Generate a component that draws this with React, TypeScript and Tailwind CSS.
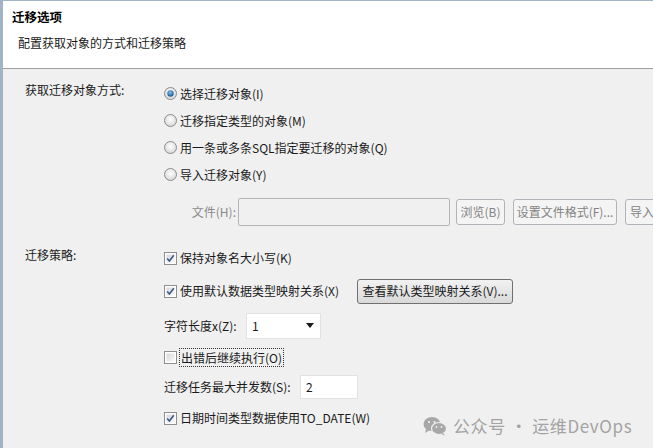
import React from 'react';

// 迁移选项页：获取对象方式 + 迁移策略
const FONT = '[font-family:"Noto_Sans_CJK_SC","Microsoft_YaHei",sans-serif]';

const Radio: React.FC<{ checked?: boolean }> = ({ checked }) => (
  <svg width="13" height="13" viewBox="0 0 13 13" className="shrink-0">
    <defs>
      <radialGradient id="rfill" cx="50%" cy="40%" r="60%">
        <stop offset="0%" stopColor="#ffffff" />
        <stop offset="100%" stopColor="#d6d6d6" />
      </radialGradient>
      <radialGradient id="rdot" cx="45%" cy="35%" r="60%">
        <stop offset="0%" stopColor="#7fc3ef" />
        <stop offset="100%" stopColor="#1d5c94" />
      </radialGradient>
    </defs>
    <circle cx="6.5" cy="6.5" r="6" fill="url(#rfill)" stroke="#8c8c8c" strokeWidth="1" />
    {checked && <circle cx="6.5" cy="6.5" r="3.2" fill="url(#rdot)" />}
  </svg>
);

const Check: React.FC<{ checked?: boolean }> = ({ checked }) => (
  <svg width="13" height="13" viewBox="0 0 13 13" className="shrink-0">
    <defs>
      <linearGradient id="cfill" x1="0" y1="0" x2="1" y2="1">
        <stop offset="0%" stopColor="#d8d8d8" />
        <stop offset="100%" stopColor="#f8f8f8" />
      </linearGradient>
    </defs>
    <rect x="0.5" y="0.5" width="12" height="12" fill="#fff" stroke="#8e8f8f" />
    <rect x="2.5" y="2.5" width="8" height="8" fill="url(#cfill)" />
    {checked && (
      <path d="M3.2 6.4 L5.4 9 L9.8 3.2" fill="none" stroke="#3a5a8c" strokeWidth="1.6" />
    )}
  </svg>
);

const WeChat = () => (
  <svg width="24" height="20" viewBox="0 0 24 20">
    <ellipse cx="9" cy="8" rx="8.5" ry="7" fill="#a8a8a8" />
    <path d="M3 13 L2 17 L7 14 Z" fill="#a8a8a8" />
    <ellipse cx="16" cy="12.5" rx="7.5" ry="6" fill="#a8a8a8" stroke="#f0f0f0" strokeWidth="1.2" />
    <path d="M20 17 L22 19.5 L18 18 Z" fill="#a8a8a8" />
    <circle cx="6" cy="6" r="1.1" fill="#f0f0f0" />
    <circle cx="11.5" cy="6" r="1.1" fill="#f0f0f0" />
    <circle cx="13.5" cy="11" r="0.9" fill="#f0f0f0" />
    <circle cx="18.5" cy="11" r="0.9" fill="#f0f0f0" />
  </svg>
);

const radioOptions = [
  { label: '选择迁移对象(I)', checked: true },
  { label: '迁移指定类型的对象(M)' },
  { label: '用一条或多条SQL指定要迁移的对象(Q)' },
  { label: '导入迁移对象(Y)' },
];

const disabledBtn =
  'shrink-0 whitespace-nowrap h-[26px] border border-[#b0b4b8] rounded-[3px] bg-[#f4f4f4] text-[#838383]';

const App: React.FC = () => {
  return (
    <div className={`w-[653px] h-[448px] overflow-hidden bg-[#f0f0f0] border-l-[3px] border-t border-[#a3b3c6] text-[12px] text-[#1a1a1a] relative ${FONT}`}>
      {/* 标题栏 */}
      <div className="h-[68px] bg-white border-b border-[#a0a0a0] pl-[9px] pt-[6px]">
        <div className="font-bold text-[12.5px] leading-[20px] text-black">迁移选项</div>
        <div className="pl-[6px] mt-[6px] leading-[20px]">配置获取对象的方式和迁移策略</div>
      </div>

      {/* 获取迁移对象方式 */}
      <div className="flex pl-[22px] pt-[11px]">
        <div className="w-[139px] shrink-0 leading-[20px]">获取迁移对象方式:</div>
        <div className="flex flex-col">
          {radioOptions.map((o) => (
            <div key={o.label} className="h-[27px] flex items-center gap-[3px]">
              <Radio checked={o.checked} />
              <span className="whitespace-nowrap">{o.label}</span>
            </div>
          ))}
          <div className="flex items-center mt-[10px] h-[28px]">
            <span className="w-[74px] shrink-0 text-right pr-[2px] text-[#8a8a8a] whitespace-nowrap">文件(H):</span>
            <div className="w-[212px] shrink-0 h-[28px] border border-[#b5b5b5] bg-[#f0f0f0] rounded-[2px]" />
            <button className={`${disabledBtn} ml-[6px] w-[49px]`}>浏览(B)</button>
            <button className={`${disabledBtn} ml-[8px] w-[104px]`}>设置文件格式(F)...</button>
            <button className={`${disabledBtn} ml-[8px] w-[40px] text-left pl-[4px]`}>导入</button>
          </div>
        </div>
      </div>

      {/* 迁移策略 */}
      <div className="flex pl-[22px] mt-[19px]">
        <div className="w-[139px] shrink-0 leading-[20px]">迁移策略:</div>
        <div className="flex flex-col">
          <div className="h-[26px] flex items-center gap-[3px]">
            <Check checked />
            <span>保持对象名大小写(K)</span>
          </div>
          <div className="h-[28px] mt-[6px] flex items-center gap-[3px]">
            <Check checked />
            <span className="whitespace-nowrap">使用默认数据类型映射关系(X)</span>
            <button className="ml-[15px] shrink-0 whitespace-nowrap h-[25px] w-[156px] border border-[#707070] rounded-[3px] bg-gradient-to-b from-[#f2f2f2] to-[#d9d9d9] text-[#1a1a1a]">
              查看默认类型映射关系(V)...
            </button>
          </div>
          <div className="h-[27px] mt-[7px] flex items-center">
            <span className="w-[82px] whitespace-nowrap">字符长度x(Z):</span>
            <div className="w-[75px] h-[26px] bg-white border border-[#e2e2e2] flex items-center justify-between pl-[5px] pr-[6px]">
              <span>1</span>
              <svg width="8" height="5" viewBox="0 0 8 5"><path d="M0 0 H8 L4 5 Z" fill="#1a1a1a" /></svg>
            </div>
          </div>
          <div className="h-[26px] mt-[5px] flex items-center gap-[2px]">
            <Check />
            <span className="border border-dotted border-[#333] leading-[17px] px-[1px]">出错后继续执行(O)</span>
          </div>
          <div className="h-[26px] mt-[4px] flex items-center">
            <span className="w-[136px] whitespace-nowrap">迁移任务最大并发数(S):</span>
            <div className="w-[58px] h-[24px] bg-white border border-[#e2e2e2] flex items-center pl-[5px]">2</div>
          </div>
          <div className="h-[26px] mt-[5px] flex items-center gap-[3px]">
            <Check checked />
            <span className="whitespace-nowrap">日期时间类型数据使用TO_DATE(W)</span>
          </div>
        </div>
      </div>

      {/* 水印 */}
      <div className="absolute left-[420px] top-[412px] flex items-center gap-[6px] text-[#a3a3a3] text-[17px] tracking-[0.6px] whitespace-nowrap">
        <WeChat />
        <span>公众号 · 运维DevOps</span>
      </div>
    </div>
  );
};

export default App;
